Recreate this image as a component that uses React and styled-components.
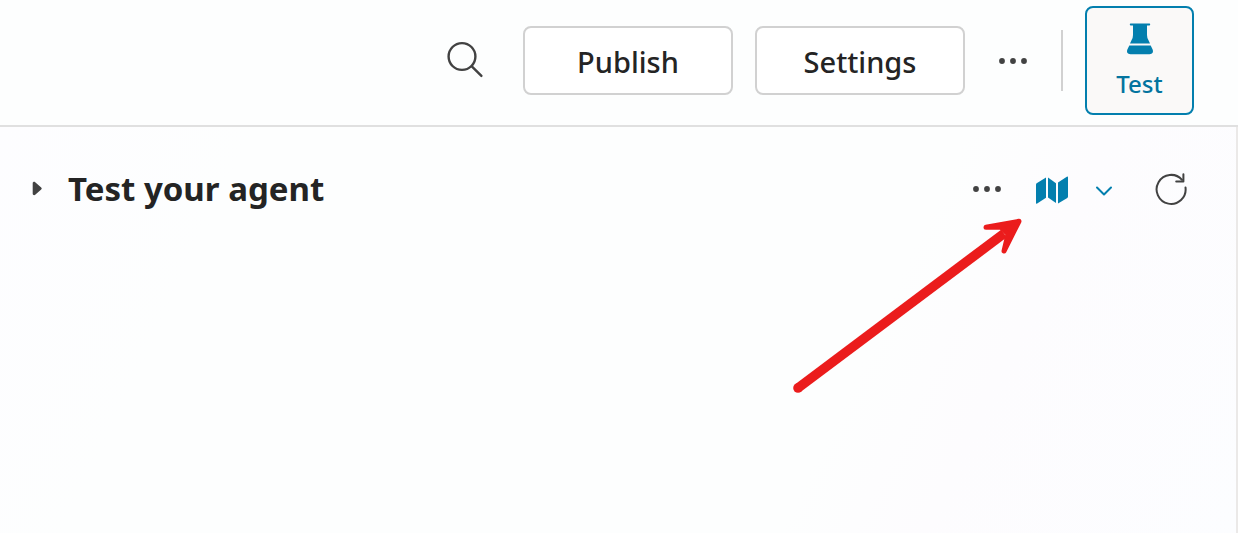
import React from "react";
import styled, { createGlobalStyle } from "styled-components";

const GlobalStyle = createGlobalStyle`
  *, *::before, *::after { box-sizing: border-box; }
  body {
    margin: 0;
    background: #fdfefe;
    color: #242424;
    font-family: "Noto Sans", "Open Sans", sans-serif;
  }
  button { font-family: inherit; color: inherit; cursor: pointer; }
`;

const Page = styled.div`
  display: flex;
  flex-direction: column;
  min-height: 100vh;
`;

const Header = styled.header`
  display: flex;
  align-items: center;
  justify-content: flex-end;
  gap: 22px;
  padding: 6px 44px 10px;
  border-bottom: 2px solid #e0e0e0;
`;

const IconButton = styled.button`
  display: inline-flex;
  align-items: center;
  justify-content: center;
  flex: none;
  width: ${({ $width }) => $width || 52}px;
  height: 52px;
  padding: 0;
  border: 0;
  background: transparent;
  color: ${({ $accent }) => ($accent ? "#037fae" : "#424242")};
`;

const OutlineButton = styled.button`
  width: 210px;
  height: 69px;
  padding: 2px 0 0;
  border: 2px solid #d1d1d1;
  border-radius: 8px;
  background: #fff;
  font-size: 29px;
  font-weight: 500;
  line-height: 40px;
`;

const Divider = styled.span`
  width: 2px;
  height: 61px;
  background: #d1d1d1;
`;

const TestButton = styled.button`
  display: flex;
  flex-direction: column;
  align-items: center;
  gap: 12px;
  width: 109px;
  height: 109px;
  padding: 14px 0 0;
  border: 2px solid #037fae;
  border-radius: 8px;
  background: #faf9f8;
  && { color: #03749f; }
  font-size: 24px;
  font-weight: 500;
  line-height: 32px;
`;

const Panel = styled.main`
  position: relative;
  flex: 1;
  padding: 36px 37px 36px 32px;
  border-right: 2px solid #ebe9e8;
  background: linear-gradient(115deg, #fdfdff 0%, #fdfefe 18%, #fdfefe 68%, #fdfcfe 78%, #fcfdff 100%);
`;

const PanelBar = styled.div`
  display: flex;
  align-items: center;
  justify-content: space-between;
`;

const TitleGroup = styled.div`
  display: flex;
  align-items: center;
  gap: 24px;
`;

const CaretButton = styled.button`
  display: flex;
  padding: 0;
  border: 0;
  background: transparent;
`;

const Title = styled.h1`
  margin: 0;
  font-size: 33px;
  font-weight: 700;
  line-height: 52px;
`;

const Actions = styled.div`
  display: flex;
  align-items: center;
  gap: 13px;
`;

const SplitButton = styled.div`
  display: flex;
`;

const Arrow = styled.svg`
  position: absolute;
  top: 83px;
  right: 206px;
  pointer-events: none;
`;

const SearchIcon = () => (
  <svg width="40" height="44" viewBox="0 0 40 44" fill="none" stroke="currentColor" strokeWidth="2.4" strokeLinecap="round" aria-hidden="true">
    <circle cx="17" cy="17.5" r="13.4" />
    <path d="M26.8 27.3L36.4 36.9" />
  </svg>
);

const MoreIcon = () => (
  <svg width="30" height="8" viewBox="0 0 30 8" fill="currentColor" aria-hidden="true">
    <circle cx="4" cy="4" r="2.9" />
    <circle cx="15" cy="4" r="2.9" />
    <circle cx="26" cy="4" r="2.9" />
  </svg>
);

const FlaskIcon = () => (
  <svg width="28" height="34" viewBox="0 0 28 34" fill="#037fae" aria-hidden="true">
    <path d="M4.5 1.5H23.5Q24.2 1.5 24.2 2.4Q24.2 3.4 23.2 3.4H21V13Q21 16 22.5 18.3L24 21.5H4L5.5 18.3Q7 16 7 13V3.4H4.8Q3.8 3.4 3.8 2.4Q3.8 1.5 4.5 1.5Z" />
    <path d="M3.3 23.4H24.7L26.4 27.1C27.8 30 26.6 32.3 23.5 32.3H4.5C1.4 32.3 .2 30 1.6 27.1Z" />
  </svg>
);

const CaretIcon = () => (
  <svg width="12" height="16" viewBox="0 0 12 16" fill="#424242" aria-hidden="true">
    <path d="M.7 2.3C.7 1 2.2.4 3.2 1.3L9.2 6.5Q10.4 7.5 9.2 8.5L3.2 13.7C2.2 14.6.7 14 .7 12.7Z" />
  </svg>
);

const MapIcon = () => (
  <svg width="32" height="34" viewBox="0 -4 32 34" fill="currentColor" aria-hidden="true">
    <path d="M10 1.6V21.8L1.2 27.6Q0 28.2 0 27V8.6Q0 7.8.7 7.3Z" />
    <path d="M12 1.6L20 7.2V27L12 21.4Z" />
    <path d="M22 6.6L30.8.8Q32 .2 32 1.4V20.6Q32 21.4 31.3 21.9L22 27.4Z" />
  </svg>
);

const ChevronIcon = () => (
  <svg width="18" height="14" viewBox="0 0 18 14" fill="none" stroke="currentColor" strokeWidth="2" strokeLinecap="round" strokeLinejoin="round" aria-hidden="true">
    <path d="M2 5.5L9 12.5L16 5.5" />
  </svg>
);

const RefreshIcon = () => (
  <svg width="34" height="34" viewBox="0 0 34 34" fill="none" stroke="currentColor" strokeWidth="2" strokeLinecap="round" strokeLinejoin="round" aria-hidden="true">
    <path d="M31.5 15.5A14.5 14.5 0 1 1 28 7.8" />
    <path d="M29.4 2.3V9.5H22.2" />
  </svg>
);

export default function App() {
  return (
    <Page>
      <GlobalStyle />
      <Header>
        <IconButton $width={72} aria-label="Search"><SearchIcon /></IconButton>
        <OutlineButton>Publish</OutlineButton>
        <OutlineButton>Settings</OutlineButton>
        <IconButton aria-label="More options"><MoreIcon /></IconButton>
        <Divider />
        <TestButton><FlaskIcon />Test</TestButton>
      </Header>
      <Panel>
        <PanelBar>
          <TitleGroup>
            <CaretButton aria-label="Expand"><CaretIcon /></CaretButton>
            <Title>Test your agent</Title>
          </TitleGroup>
          <Actions>
            <IconButton aria-label="More test options"><MoreIcon /></IconButton>
            <SplitButton>
              <IconButton $accent aria-label="Activity map"><MapIcon /></IconButton>
              <IconButton $accent aria-label="Map options"><ChevronIcon /></IconButton>
            </SplitButton>
            <IconButton $width={56} aria-label="Refresh"><RefreshIcon /></IconButton>
          </Actions>
        </PanelBar>
        <Arrow width="240" height="190" viewBox="0 0 240 190" fill="#eb1c1c" aria-hidden="true">
          <path d="M8 178L214 23.5" stroke="#eb1c1c" strokeWidth="9.6" strokeLinecap="butt" fill="none" />
          <circle cx="8" cy="178" r="4.8" />
          <path d="M196 17.2L229 11.3L214 41L218 24L211 17.2Z" stroke="#eb1c1c" strokeWidth="5" strokeLinejoin="round" />
        </Arrow>
      </Panel>
    </Page>
  );
}
